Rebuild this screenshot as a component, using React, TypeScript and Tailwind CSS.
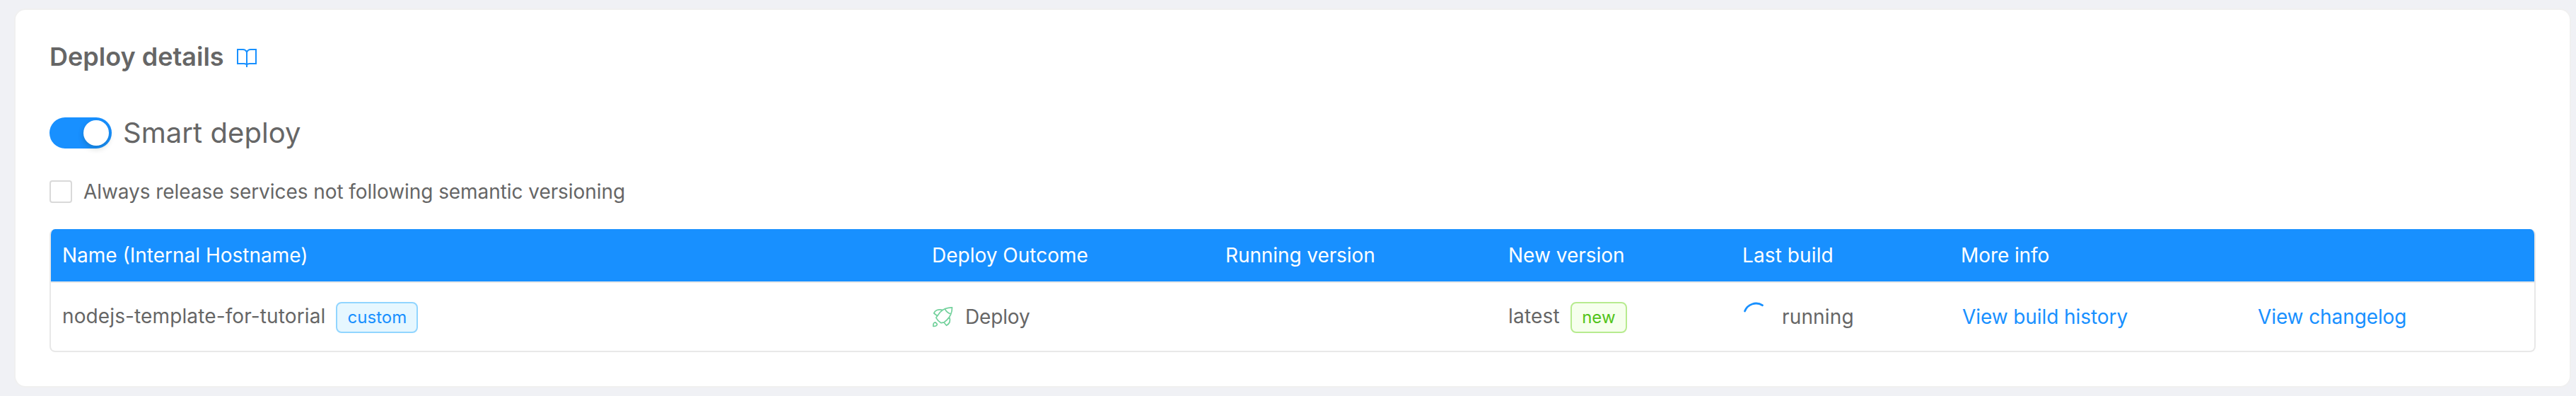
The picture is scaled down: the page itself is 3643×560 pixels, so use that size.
import type { ReactNode } from "react";

function BookIcon() {
  return (
    <svg className="ml-[17px] mt-1.5 size-[30px]" viewBox="0 0 30 30" fill="none" stroke="#1890ff" strokeWidth="2">
      <path d="M15 25V6C14 3.200 12 2 9.500 2H2V22H11C13.500 22 15 23 15 24.500C15 23 16.500 22 19 22H28V2H20.500C18 2 16 3.200 15 6M15 24V27" />
    </svg>
  );
}

function RocketIcon() {
  return (
    <svg className="mr-[17px] size-[30px] shrink-0" viewBox="0 0 30 30" fill="none" stroke="#73d19c" strokeWidth="1.7" strokeLinejoin="round">
      <path d="M28.500 1.800C21 1.800 15.500 4 11.500 8.500L5.800 16.300C7.500 19.500 10 22 13 23.700L17 22.800L21 19.500C26 15 28.500 9 28.500 1.800ZM18.500 4.200C20 7.500 23 10 27 11.200M15.500 5.500C9 3.500 4 6 2.800 10L7.300 13.500M24.500 15C26.500 20.500 25.500 24.500 20.500 27.300L17 23M1.800 28.300C1.500 25 2.500 22.800 5 22.800L7.300 25.300C7 27.500 4.500 28.500 1.800 28.300Z" />
    </svg>
  );
}

function Spinner() {
  return (
    <svg className="mr-4 size-10 shrink-0 overflow-visible" viewBox="0 0 40 40" fill="none" stroke="#1890ff" strokeWidth="2.8" strokeLinecap="round">
      <path d="M3.500 12A17.100 17.100 0 0 1 28.500 3.700" />
    </svg>
  );
}

const tones = {
  blue: "w-[116px] border-[#91d5ff] bg-[#e6f7ff] text-[#1890ff]",
  green: "w-20 border-[#b7eb8f] bg-[#f6ffed] text-[#52c41a]",
};

function Tag({ tone, children }: { tone: "blue" | "green"; children: ReactNode }) {
  return (
    <span className={`ml-[15px] mt-0.5 flex h-11 items-center justify-center rounded-lg border-2 text-[24px] leading-[40px] ${tones[tone]}`}>
      {children}
    </span>
  );
}

const columns = "grid grid-cols-[1230px_415px_400px_331px_309px_420px_1fr] items-center";

export default function App() {
  return (
    <div className="h-[560px] w-[3643px] bg-[#f0f1f5] pl-[22px] pr-[9px] pt-[14px] font-['Inter',sans-serif] text-[28px] leading-[44px] text-[#666]">
      <section className="h-[532px] rounded-[14px] bg-white px-12 pt-[38px] shadow-[0_0_0_2px_#f0f0f0]">
        <h2 className="flex h-[56px] items-center text-[36px] font-semibold">
          Deploy details
          <BookIcon />
        </h2>
        <div className="mt-[50px] flex h-[60px] items-center">
          <div className="flex h-11 w-[88px] items-center justify-end rounded-full bg-[#1890ff] pr-1">
            <div className="size-9 rounded-full bg-white shadow-[0_4px_8px_rgba(0,35,11,0.2)]" />
          </div>
          <span className="ml-4 text-[40px] tracking-[0.05px]">Smart deploy</span>
        </div>
        <div className="mt-[31px] flex h-[44px] items-center">
          <div className="size-8 rounded-[4px] border-2 border-[#d9d9d9]" />
          <span className="ml-4 tracking-[-0.065px]">Always release services not following semantic versioning</span>
        </div>
        <div className="mt-[31px] h-[174px] w-[3516px] overflow-hidden rounded-[8px] border-x-2 border-b-2 border-[#e8e8e8]">
          <div className={`${columns} h-[76px] border-b-2 border-[#e8e8e8] bg-[#1890ff] px-4 text-white`}>
            <span>Name (Internal Hostname)</span>
            <span>Deploy Outcome</span>
            <span className="tracking-[-0.09px]">Running version</span>
            <span>New version</span>
            <span className="tracking-[0.1px]">Last build</span>
            <span className="tracking-[-0.09px]">More info</span>
          </div>
          <div className={`${columns} h-24 px-4`}>
            <div className="flex items-center">
              <span className="pb-0.5 tracking-[0.12px]">nodejs-template-for-tutorial</span>
              <Tag tone="blue">custom</Tag>
            </div>
            <div className="flex items-center">
              <RocketIcon />
              <span className="tracking-[-0.15px]">Deploy</span>
            </div>
            <span />
            <div className="flex items-center">
              <span className="pb-0.5 tracking-[0.2px]">latest</span>
              <Tag tone="green">new</Tag>
            </div>
            <div className="flex items-center">
              <Spinner />
              <span className="tracking-[0.15px]">running</span>
            </div>
            <a className="ml-0.5 tracking-[-0.08px] text-[#1890ff]">View build history</a>
            <a className="tracking-[-0.1px] text-[#1890ff]">View changelog</a>
          </div>
        </div>
      </section>
    </div>
  );
}
